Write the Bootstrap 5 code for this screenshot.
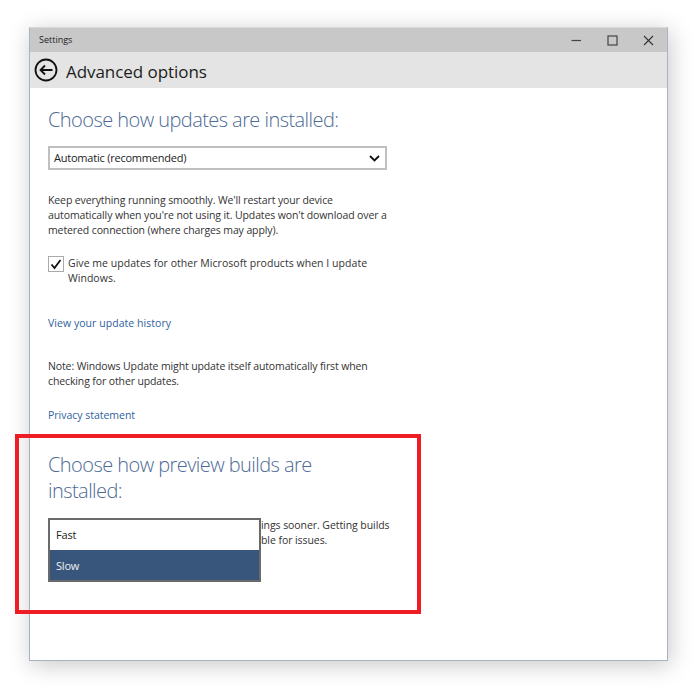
<!doctype html>
<html lang="en"><head><meta charset="utf-8"><title>Settings</title>
<link href="https://cdn.jsdelivr.net/npm/bootstrap@5.3.0/dist/css/bootstrap.min.css" rel="stylesheet">
<style>
html,body{height:100%;background:#fff;overflow:hidden}
body{padding:27px 27px 30px 29px;font-family:"Open Sans","Noto Sans",sans-serif}
.win{height:634px;border:1px solid #a9b3c6;border-top-color:#d8d8d8;box-shadow:2px 4px 22px rgba(0,0,0,.22);background:#fff;position:relative;width:639px}
.tbar{height:24px;background:#c8c8c8;font-size:9px;color:#222;padding-left:9px}
.wbtns{gap:25px;padding-right:13px}
.hbar{height:36px;background:#e4e4e4;padding-left:4px;gap:8px}
.htitle{font-size:17px;color:#1c1c1c;letter-spacing:-.06px;line-height:1;padding-top:3px}
.body-area{padding:19px 0 0 18px;width:380px}
.bluehead{font-family:"Open Sans",sans-serif;font-weight:300;font-size:20px;letter-spacing:-.56px;color:#4d6a94;line-height:26px;margin:0}
.fakeselect{width:339px;height:24px;border:2px solid #c0c0c0;font-size:11px;letter-spacing:-.22px;padding:1px 5px 0 4px;color:#222;margin-top:13px}
.txt{font-size:10.500px;letter-spacing:-.11px;line-height:15px;color:#333;margin:0}
.lnk{font-size:10.500px;line-height:15px;color:#2f5f9e;text-decoration:none;display:block}
.chk{width:16px;height:16px;border:1px solid #aaa;flex:none;background:#fff}
.chkrow{margin-top:18px;gap:4px}
.chktxt{letter-spacing:.04px}
.m1{margin-top:23px}
.hist{margin-top:30px;letter-spacing:.05px}
.note{margin-top:28px;letter-spacing:-.12px}
.priv{margin-top:19px;letter-spacing:-.02px}
.head2{margin-top:29px}
.tail{margin:14px 0 0 213px;letter-spacing:-.07px;line-height:14.500px}
.rbox{position:absolute;left:-15px;top:406px;width:406px;height:180px;border:4px solid #ee1c25}
.ddl{position:absolute;left:18px;top:490px;width:213px;height:64px;border:2px solid #6a6a6a;background:#fff;font-size:11px;letter-spacing:-.2px}
.ddl div{height:30px;padding-left:6px}
.ddl .opt-on{background:#38567c;color:#f0f0f0;padding-top:2px}
.opt-off{color:#222}
</style></head><body>
<div class="win">
 <div class="tbar d-flex align-items-center justify-content-between">
  <span>Settings</span>
  <div class="wbtns d-flex align-items-center">
   <svg width="11" height="11" viewBox="0 0 11 11"><path d="M.5 5.500h9.500" stroke="#444" stroke-width="1.200"/></svg>
   <svg width="11" height="11" viewBox="0 0 11 11"><rect x="1" y="1" width="9" height="9" fill="none" stroke="#444" stroke-width="1.200"/></svg>
   <svg width="11" height="11" viewBox="0 0 11 11"><path d="M1 1l9 9M10 1l-9 9" stroke="#333" stroke-width="1.100"/></svg>
  </div>
 </div>
 <div class="hbar d-flex align-items-center">
  <svg width="24" height="24" viewBox="0 0 24 24"><circle cx="12" cy="12" r="10.500" fill="none" stroke="#111" stroke-width="1.800"/><path d="M18.500 12H6.500M11 7.500L6.500 12l4.500 4.500" fill="none" stroke="#111" stroke-width="1.800"/></svg>
  <span class="htitle">Advanced options</span>
 </div>
 <div class="body-area">
  <h2 class="bluehead">Choose how updates are installed:</h2>
  <div class="fakeselect d-flex align-items-center justify-content-between">
   <span>Automatic (recommended)</span>
   <svg width="11" height="7" viewBox="0 0 11 7"><path d="M1 1l4.500 4.500L10 1" fill="none" stroke="#111" stroke-width="1.800"/></svg>
  </div>
  <p class="txt m1">Keep everything running smoothly. We'll restart your device<br>automatically when you're not using it. Updates won't download over a<br>metered connection (where charges may apply).</p>
  <div class="d-flex chkrow">
   <span class="chk d-flex align-items-center justify-content-center"><svg width="12" height="11" viewBox="0 0 12 11"><path d="M1.500 5.500l3 3.500L10.500 1" fill="none" stroke="#111" stroke-width="1.800"/></svg></span>
   <span class="txt chktxt">Give me updates for other Microsoft products when I update<br>Windows.</span>
  </div>
  <a class="lnk hist" href="#">View your update history</a>
  <p class="txt note">Note: Windows Update might update itself automatically first when<br>checking for other updates.</p>
  <a class="lnk priv" href="#">Privacy statement</a>
  <h2 class="bluehead head2">Choose how preview builds are<br>installed:</h2>
  <p class="txt tail">ings sooner. Getting builds<br>ble for issues.</p>
 </div>
 <div class="ddl"><div class="opt-off d-flex align-items-center">Fast</div><div class="opt-on d-flex align-items-center">Slow</div></div>
 <div class="rbox"></div>
</div>
</body></html>
